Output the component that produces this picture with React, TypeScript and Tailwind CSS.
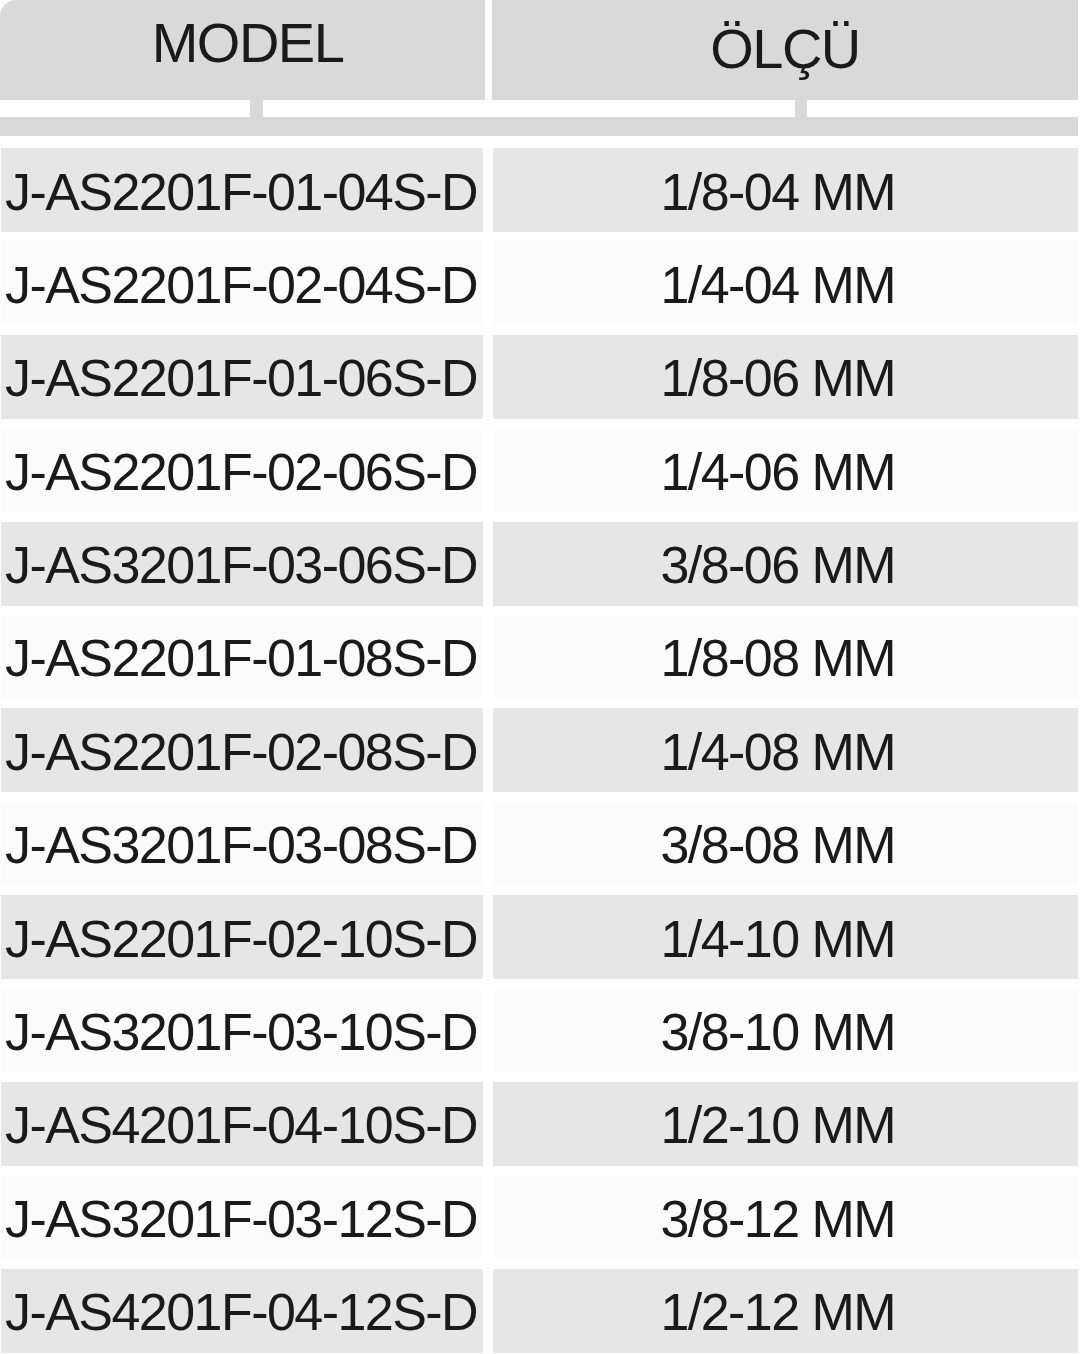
import React from "react";

const rows = [
  ["J-AS2201F-01-04S-D", "1/8-04 MM"],
  ["J-AS2201F-02-04S-D", "1/4-04 MM"],
  ["J-AS2201F-01-06S-D", "1/8-06 MM"],
  ["J-AS2201F-02-06S-D", "1/4-06 MM"],
  ["J-AS3201F-03-06S-D", "3/8-06 MM"],
  ["J-AS2201F-01-08S-D", "1/8-08 MM"],
  ["J-AS2201F-02-08S-D", "1/4-08 MM"],
  ["J-AS3201F-03-08S-D", "3/8-08 MM"],
  ["J-AS2201F-02-10S-D", "1/4-10 MM"],
  ["J-AS3201F-03-10S-D", "3/8-10 MM"],
  ["J-AS4201F-04-10S-D", "1/2-10 MM"],
  ["J-AS3201F-03-12S-D", "3/8-12 MM"],
  ["J-AS4201F-04-12S-D", "1/2-12 MM"],
];

export default function App() {
  return (
    <div
      className="w-[1080px] h-[1354px] bg-white text-[#1a1a1a] overflow-hidden"
      style={{ fontFamily: '"Liberation Sans", Arial, sans-serif' }}
    >
      {/* Header */}
      <div className="flex h-[100px] gap-[7px] mr-[2px]">
        <div className="w-[485px] bg-[#d9d9d9] rounded-tl-[16px] flex justify-center pt-[15px] pl-[10px]">
          <span className="text-[56px] leading-none tracking-[-1.5px]">MODEL</span>
        </div>
        <div className="flex-1 bg-[#d9d9d9] flex justify-center pt-[21px]">
          <span className="text-[56px] leading-none tracking-[-1.5px]">ÖLÇÜ</span>
        </div>
      </div>

      {/* Connector */}
      <div className="flex h-[17px]">
        <div className="ml-[250px] w-[13px] bg-[#d9d9d9]" />
        <div className="ml-[532px] w-[12px] bg-[#d9d9d9]" />
      </div>
      <div className="h-[19px] mr-[2px] bg-[#d9d9d9]" />

      {/* Rows */}
      <div className="flex flex-col gap-[9.4px] mt-[12px]">
        {rows.map(([model, size], i) => {
          const bg = i % 2 === 0 ? "bg-[#e6e6e6]" : "bg-[#fbfbfb]";
          return (
            <div key={model} className="flex h-[84px] gap-[10px] ml-[1px] mr-[2px]">
              <div className={`w-[482px] ${bg} flex items-center pl-[4px] pt-[3px]`}>
                <span className="text-[52px] leading-none tracking-[-1.55px] whitespace-nowrap">{model}</span>
              </div>
              <div className={`flex-1 ${bg} flex items-center justify-end pr-[183px] pt-[3px]`}>
                <span className="text-[52px] leading-none tracking-[-1.55px] whitespace-nowrap">{size}</span>
              </div>
            </div>
          );
        })}
      </div>
    </div>
  );
}
